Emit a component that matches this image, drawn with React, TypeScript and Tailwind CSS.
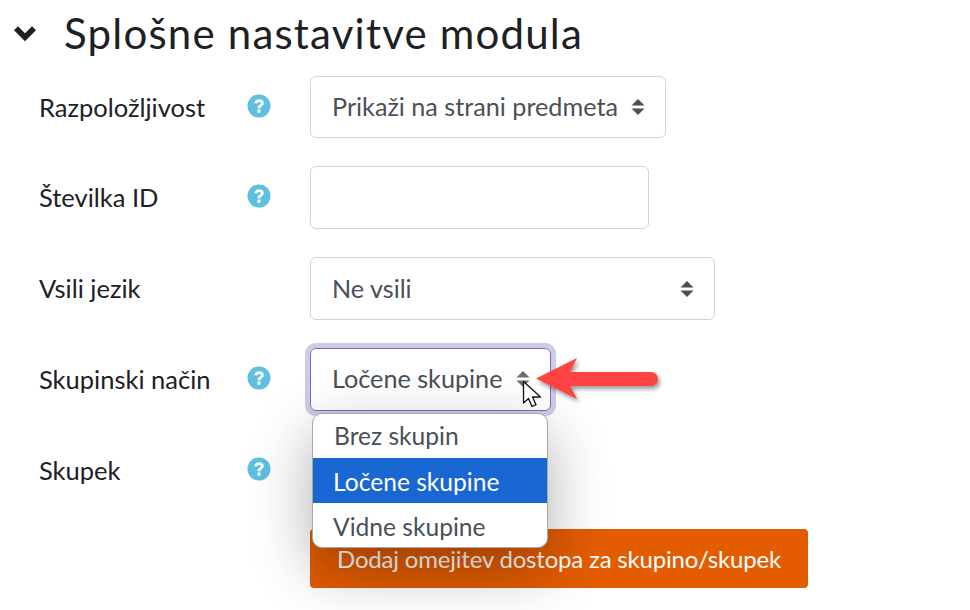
import React from "react";

const font = { fontFamily: 'Lato, "Noto Sans", "Liberation Sans", sans-serif' };

function Help() {
  return (
    <svg width="24" height="24" viewBox="0 0 24 24" className="block">
      <circle cx="12" cy="12" r="11.5" fill="#5fbfde" />
      <path d="M7.4 9.2C7.7 6.6 9.6 5.2 12.1 5.2c2.6 0 4.7 1.6 4.7 3.9 0 1.8-1.1 2.7-2.2 3.4-.9.6-1.1.9-1.1 1.8h-3c0-1.8.5-2.6 1.7-3.4 1-.6 1.5-1 1.5-1.7 0-.8-.7-1.3-1.6-1.3-1 0-1.6.6-1.8 1.6z" fill="#fff" />
      <rect x="10.4" y="15.6" width="3.1" height="3.1" rx=".6" fill="#fff" />
    </svg>
  );
}

function Carets({ color = "#495057" }: { color?: string }) {
  return (
    <svg width="14" height="18" viewBox="0 0 14 18" className="block shrink-0">
      <path d="M7 1l6.5 6.6H.5z" fill={color} />
      <path d="M7 17l6.5-6.6H.5z" fill={color} />
    </svg>
  );
}

function Row({ label, help = true, first = false, children }: { label: string; help?: boolean; first?: boolean; children?: React.ReactNode }) {
  return (
    <div className={first ? "flex items-start h-[62px] mb-[28px]" : "flex items-start h-[63px] mb-[28px]"}>
      <div className="w-[247px] pl-[39px] h-full flex items-center whitespace-nowrap text-[25.5px] text-[#1d2125] shrink-0">{label}</div>
      <div className="w-[63px] h-full flex items-center pb-[3px] shrink-0">{help && <Help />}</div>
      {children}
    </div>
  );
}

export default function App() {
  return (
    <div className="relative w-[970px] h-[610px] overflow-hidden bg-white" style={font}>
      <div className="flex items-center h-[76px] pb-[10px]">
        <svg width="24" height="18" viewBox="0 0 24 18" className="ml-[13px] shrink-0">
          <path d="M3 4.2l9 9 9-9" fill="none" stroke="#1d2125" strokeWidth="5.6" />
        </svg>
        <h2 className="ml-[27px] text-[42px] tracking-[1.2px] leading-none text-[#1d2125]">Splošne nastavitve modula</h2>
      </div>

      <Row label="Razpoložljivost" first>
        <div className="w-[356px] h-[62px] border border-[#ced4da] rounded-[6px] flex items-center justify-between pl-[21px] pr-[20px] text-[25.2px] text-[#495057]">
          <span>Prikaži na strani predmeta</span>
          <Carets />
        </div>
      </Row>
      <Row label="Številka ID">
        <div className="w-[339px] h-[63px] border border-[#ced4da] rounded-[6px]" />
      </Row>
      <Row label="Vsili jezik" help={false}>
        <div className="w-[405px] h-[63px] border border-[#ced4da] rounded-[6px] flex items-center justify-between pl-[21px] pr-[20px] text-[25.2px] text-[#495057]">
          <span>Ne vsili</span>
          <Carets />
        </div>
      </Row>
      <Row label="Skupinski način">
        <div className="w-[241px] h-[63px] border border-[#7a69c9] rounded-[6px] shadow-[0_0_0_5px_#cfcbe3] flex items-center justify-between pl-[21px] pr-[20px] pb-[1px] text-[25.2px] text-[#495057]">
          <span>Ločene skupine</span>
          <Carets color="#6b6f73" />
        </div>
      </Row>
      <Row label="Skupek" />
      <div className="ml-[310px] -mt-[1px] w-[498px] h-[59px] bg-[#e35c00] rounded-[4px] flex items-center justify-center text-[24px] tracking-[-0.2px] text-white">
        Dodaj omejitev dostopa za skupino/skupek
      </div>

      {/* open select list */}
      <div className="absolute left-[312px] top-[413px] w-[236px] h-[135px] bg-white rounded-[10px] border border-[#a8a8a8] overflow-hidden shadow-[0_20px_60px_rgba(0,0,0,0.32)] text-[24.6px] text-[#495057]">
        <div className="h-[44px] flex items-center pl-[21px]">Brez skupin</div>
        <div className="h-[45px] flex items-center pl-[20px] pt-[3px] bg-[#1967d2] text-white">Ločene skupine</div>
        <div className="h-[44px] flex items-center pl-[20px] pt-[4px]">Vidne skupine</div>
      </div>

      {/* annotation arrow */}
      <svg width="130" height="50" viewBox="0 0 130 50" className="absolute left-[535px] top-[356px]" style={{ filter: "drop-shadow(2px 3px 2px rgba(0,0,0,0.4))" }}>
        <path d="M1 22.5L42 2 35 16H116a7 7 0 010 14H35l7 13z" fill="#ff4343" />
      </svg>

      {/* mouse pointer */}
      <svg width="24" height="30" viewBox="0 0 24 30" className="absolute left-[522px] top-[380px]">
        <path d="M1.5 1.5V23l5-4.5 3.5 8 4-1.8-3.5-7.7h8z" fill="#fff" stroke="#111" strokeWidth="1.3" strokeLinejoin="round" />
      </svg>
    </div>
  );
}
